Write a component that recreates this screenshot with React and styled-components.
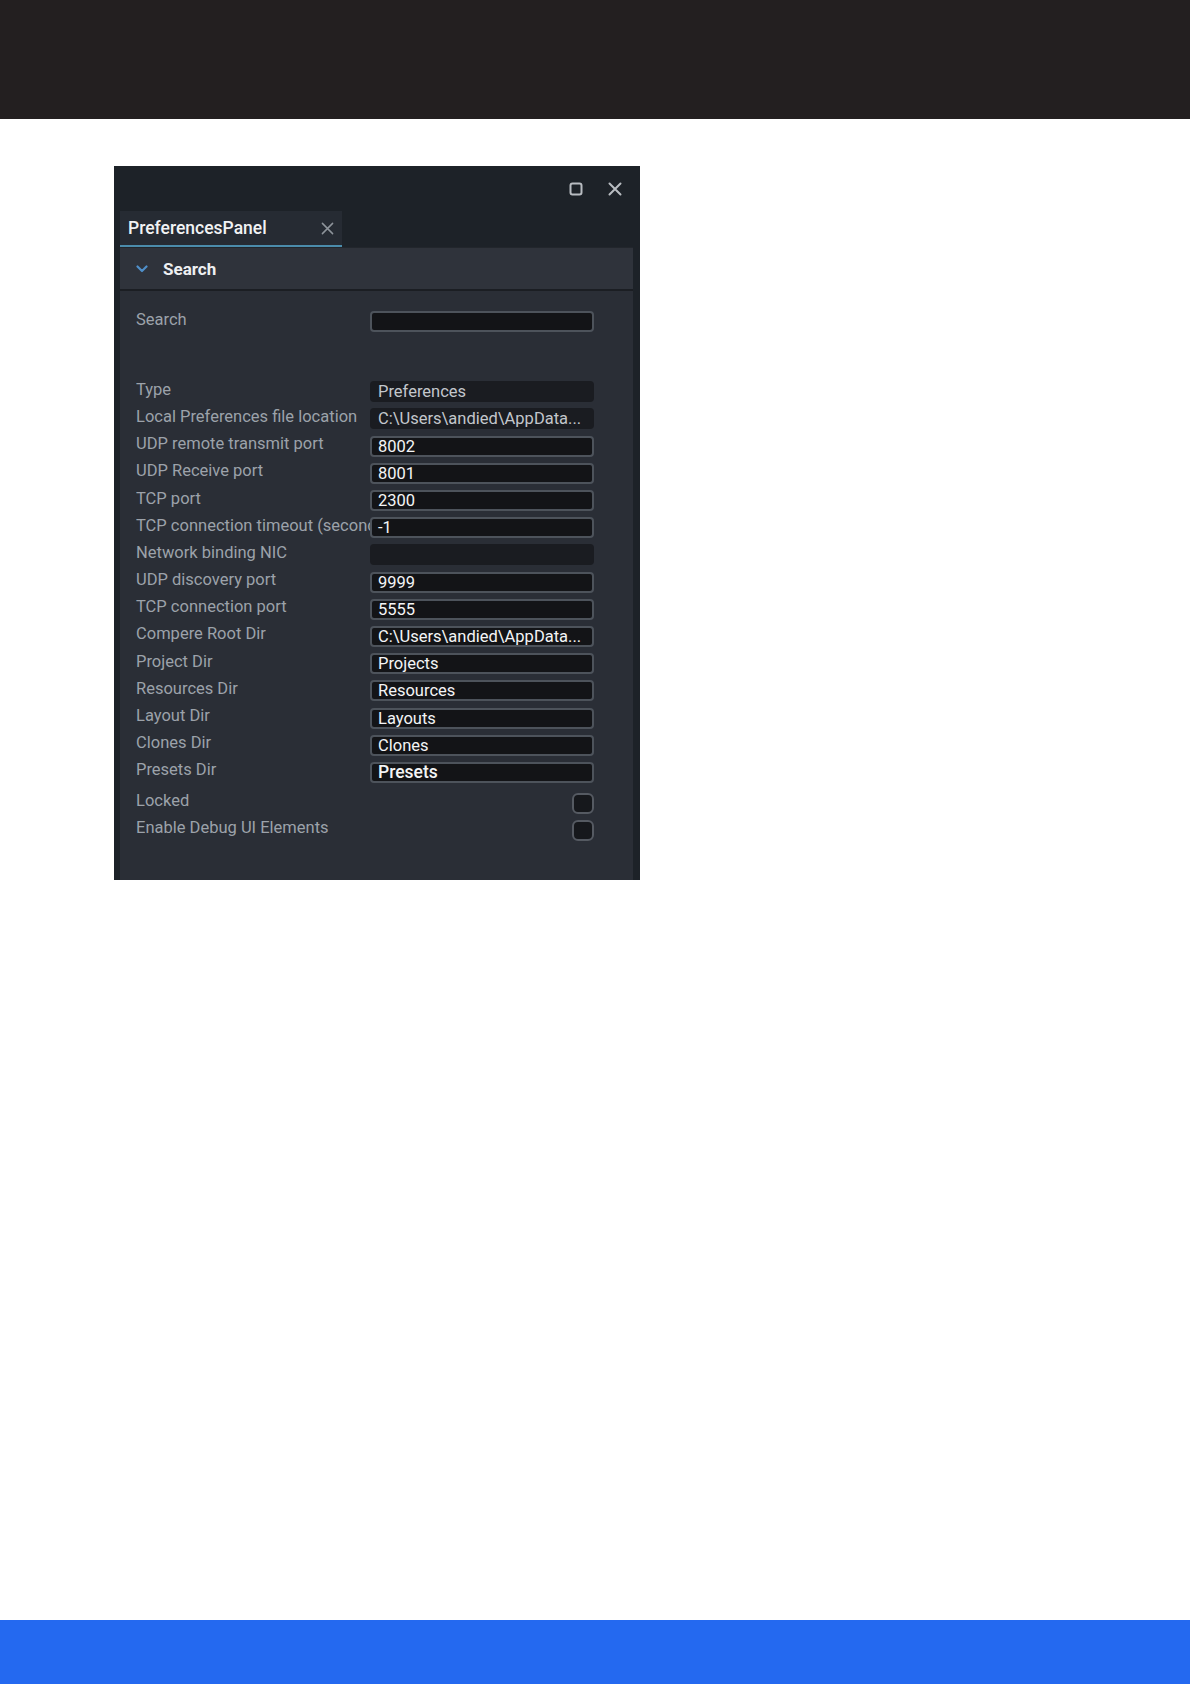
import React from "react";
import styled, { createGlobalStyle } from "styled-components";

const GlobalStyle = createGlobalStyle`
  html, body {
    margin: 0;
    padding: 0;
    background: #ffffff;
  }
  body {
    font-family: Roboto, "Liberation Sans", Arial, sans-serif;
  }
`;

const Page = styled.div`
  display: flex;
  flex-direction: column;
  min-height: 1684px;
  width: 1190px;
`;

const TopBar = styled.div`
  height: 119px;
  background-color: #231f20;
`;

const Stage = styled.div`
  flex: 1;
  padding: 47px 0 0 114px;
`;

const Footer = styled.div`
  height: 64px;
  background-color: #2469f0;
`;

const Panel = styled.div`
  width: 526px;
  height: 714px;
  background-color: #1d2228;
  display: flex;
  flex-direction: column;
  box-sizing: border-box;
  padding: 0 6px 0 6px;
`;

const TitleBar = styled.div`
  height: 45px;
  display: flex;
  align-items: center;
  justify-content: flex-end;
  gap: 25px;
  padding-right: 12px;
  color: #b8bcc1;
`;

const TabStrip = styled.div`
  display: flex;
`;

const Tab = styled.div`
  width: 222px;
  height: 36px;
  box-sizing: border-box;
  background-color: #262b33;
  border-bottom: 2px solid #4b8cab;
  display: flex;
  align-items: center;
  justify-content: space-between;
  padding: 0 8px 0 8px;
  color: #f1f2f4;
  font-size: 17.5px;
  font-weight: 500;
`;

const TabClose = styled.span`
  display: flex;
  color: #8e949b;
`;

const Section = styled.div`
  flex: 1;
  background-color: #2a2e36;
  margin-right: 1px;
  display: flex;
  flex-direction: column;
`;

const SectionHeader = styled.div`
  height: 44px;
  box-sizing: border-box;
  background-color: #2f333b;
  border-top: 1px solid #22262c;
  border-bottom: 2px solid #1b1e23;
  display: flex;
  align-items: center;
  padding-left: 16px;
  gap: 15px;
  color: #eef0f2;
  font-size: 17px;
  font-weight: 700;
`;

const Body = styled.div`
  padding: 17px 0 0 16px;
  display: flex;
  flex-direction: column;
`;

const Group = styled.div`
  display: flex;
  flex-direction: column;
  margin-top: ${(p) => p.gap || 0}px;
`;

const Row = styled.div`
  display: grid;
  grid-template-columns: 234px 224px;
  align-items: center;
  height: 27.2px;
`;

const Label = styled.div`
  color: #9ca2aa;
  font-size: 16.5px;
  white-space: nowrap;
  overflow: hidden;
  padding-bottom: 5px;
`;

const Field = styled.div`
  height: 21px;
  box-sizing: border-box;
  border-radius: 4px;
  background-color: ${(p) => (p.readOnly ? "#1a1c21" : "#131417")};
  border: ${(p) => (p.readOnly ? "none" : "2px solid #4d535b")};
  color: ${(p) => (p.readOnly ? "#c3c7cc" : "#f4f5f6")};
  font-size: ${(p) => (p.big ? 17.5 : 16.5)}px;
  font-weight: ${(p) => (p.big ? 500 : 400)};
  line-height: 17px;
  padding-left: ${(p) => (p.readOnly ? 8 : 6)}px;
  white-space: nowrap;
  overflow: hidden;
  display: flex;
  align-items: center;
`;

const Check = styled.div`
  justify-self: end;
  width: 22px;
  height: 21px;
  box-sizing: border-box;
  margin-top: 1px;
  border-radius: 6px;
  border: 2px solid #555a62;
  background-color: #16181c;
`;

const Chevron = () => (
  <svg width="12" height="8" viewBox="0 0 12 8">
    <path d="M1.5 1.5 L6 6 L10.5 1.5" fill="none" stroke="#4f8fc9" strokeWidth="2.2" strokeLinecap="round" strokeLinejoin="round" />
  </svg>
);

const MaxIcon = () => (
  <svg width="14" height="14" viewBox="0 0 14 14">
    <rect x="1.5" y="1.5" width="11" height="11" rx="2" fill="none" stroke="currentColor" strokeWidth="2" />
  </svg>
);

const CloseIcon = ({ size = 14, w = 2 }) => (
  <svg width={size} height={size} viewBox="0 0 14 14">
    <path d="M1.5 1.5 L12.5 12.5 M12.5 1.5 L1.5 12.5" fill="none" stroke="currentColor" strokeWidth={w} strokeLinecap="round" />
  </svg>
);

const fields = [
  { label: "Type", value: "Preferences", readOnly: true },
  { label: "Local Preferences file location", value: "C:\\Users\\andied\\AppData...", readOnly: true },
  { label: "UDP remote transmit port", value: "8002" },
  { label: "UDP Receive port", value: "8001" },
  { label: "TCP port", value: "2300" },
  { label: "TCP connection timeout (seconds)", value: "-1" },
  { label: "Network binding NIC", value: "", readOnly: true },
  { label: "UDP discovery port", value: "9999" },
  { label: "TCP connection port", value: "5555" },
  { label: "Compere Root Dir", value: "C:\\Users\\andied\\AppData..." },
  { label: "Project Dir", value: "Projects" },
  { label: "Resources Dir", value: "Resources" },
  { label: "Layout Dir", value: "Layouts" },
  { label: "Clones Dir", value: "Clones" },
  { label: "Presets Dir", value: "Presets", big: true },
];

const checks = ["Locked", "Enable Debug UI Elements"];

function App() {
  return (
    <Page>
      <GlobalStyle />
      <TopBar />
      <Stage>
        <Panel>
          <TitleBar>
            <MaxIcon />
            <CloseIcon />
          </TitleBar>
          <TabStrip>
            <Tab>
              PreferencesPanel
              <TabClose>
                <CloseIcon size={13} w={1.6} />
              </TabClose>
            </Tab>
          </TabStrip>
          <Section>
            <SectionHeader>
              <Chevron />
              Search
            </SectionHeader>
            <Body>
              <Group>
                <Row>
                  <Label>Search</Label>
                  <Field />
                </Row>
              </Group>
              <Group gap={43}>
                {fields.map((f) => (
                  <Row key={f.label}>
                    <Label>{f.label}</Label>
                    <Field readOnly={f.readOnly} big={f.big}>
                      {f.value}
                    </Field>
                  </Row>
                ))}
              </Group>
              <Group gap={3}>
                {checks.map((c) => (
                  <Row key={c}>
                    <Label>{c}</Label>
                    <Check />
                  </Row>
                ))}
              </Group>
            </Body>
          </Section>
        </Panel>
      </Stage>
      <Footer />
    </Page>
  );
}

export default App;
